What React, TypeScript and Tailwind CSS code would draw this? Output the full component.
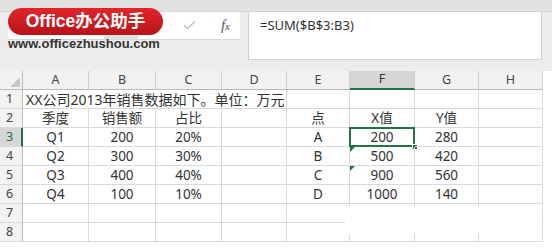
import { Check } from 'lucide-react'

const colW = ['w-[66px]', 'w-[67px]', 'w-[66px]', 'w-[65px]', 'w-[63px]', 'w-[65px]', 'w-[64px]', 'w-[64px]']
const letters = ['A', 'B', 'C', 'D', 'E', 'F', 'G', 'H']

// rows 2..8, columns A..H
const rows: string[][] = [
    ['季度', '销售额', '占比', '', '点', 'X值', 'Y值', ''],
    ['Q1', '200', '20%', '', 'A', '200', '280', ''],
    ['Q2', '300', '30%', '', 'B', '500', '420', ''],
    ['Q3', '400', '40%', '', 'C', '900', '560', ''],
    ['Q4', '100', '10%', '', 'D', '1000', '140', ''],
    ['', '', '', '', '', '', '', ''],
    ['', '', '', '', '', '', '', ''],
]

const RowHead = ({ n, active }: { n: number, active?: boolean }) => (
    <div
        className={`w-[23px] h-[19px] shrink-0 flex items-center pl-[6px] text-[12.5px] border-b border-[#dadada] ${
            active ? 'bg-[#d6d6d6] text-[#217346] border-r-2 border-r-[#217346]' : 'bg-[#f2f2f2] text-[#444] border-r border-r-[#b9b9b9]'
        }`}
    >
        {n}
    </div>
)

export default function App() {
    return (
        <div className="relative w-[552px] h-[250px] bg-white overflow-hidden font-['Noto_Sans','Noto_Sans_CJK_SC',sans-serif] text-[#333]">
            {/* Toolbar / formula bar */}
            <div className="h-[71px] bg-[#ececec] flex flex-col">
                <div className="h-[12px] bg-[#e2e2e2] border-b border-[#d6d6d6]" />
                <div className="flex gap-[8px] pl-[8px]">
                    <div className="w-[232px] h-[28px] bg-white flex items-center border-b border-[#d8d8d8]">
                        <div className="w-[96px]" />
                        <div className="w-[34px] h-full flex items-end">
                            <div className="w-full h-[8px] bg-[#e0e0e0]" />
                        </div>
                        <div className="flex-1 flex items-center justify-end gap-[24px] pr-[10px]">
                            <Check size={15} strokeWidth={2} className="text-[#b8b8b8]" />
                            <span className="font-['Liberation_Serif',serif] italic text-[15px] text-[#555] leading-none">
                                f<span className="text-[11px]">x</span>
                            </span>
                        </div>
                    </div>
                    <div className="w-[294px] h-[49px] -mt-px bg-white border border-[#d3d3d3] pl-[11px] pt-[4px] text-[13px] text-[#333]">
                        =SUM($B$3:B3)
                    </div>
                </div>
            </div>

            {/* Grid */}
            <div className="flex flex-col">
                {/* column header */}
                <div className="flex h-[19px]">
                    <div className="w-[23px] h-[19px] shrink-0 bg-[#f2f2f2] border-r border-b border-[#b9b9b9] flex items-end justify-end p-[2px]">
                        <div className="w-0 h-0 border-l-[10px] border-l-transparent border-b-[10px] border-b-[#c8c8c8]" />
                    </div>
                    {letters.map((l, i) => (
                        <div
                            key={l}
                            className={`${colW[i]} h-[19px] shrink-0 flex items-center justify-center text-[12.5px] border-r border-r-[#d0d0d0] ${
                                l === 'F' ? 'bg-[#d6d6d6] border-b-2 border-b-[#217346] text-[#333]' : 'bg-[#f2f2f2] border-b border-b-[#b9b9b9] text-[#444]'
                            }`}
                        >
                            {l}
                        </div>
                    ))}
                </div>

                {/* row 1 */}
                <div className="flex h-[19px]">
                    <RowHead n={1} />
                    <div className="w-[264px] h-[19px] shrink-0 border-r border-b border-[#dadada] pl-[3px] flex items-center text-[14px] whitespace-nowrap">
                        XX公司2013年销售数据如下。单位：万元
                    </div>
                    {[4, 5, 6, 7].map((i) => (
                        <div key={i} className={`${colW[i]} h-[19px] shrink-0 border-r border-b border-[#dadada]`} />
                    ))}
                </div>

                {rows.map((r, ri) => {
                    const n = ri + 2
                    return (
                        <div key={n} className="flex h-[19px]">
                            <RowHead n={n} active={n === 3} />
                            {r.map((v, ci) => (
                                <div
                                    key={ci}
                                    className={`relative ${colW[ci]} h-[19px] shrink-0 border-r border-b border-[#dadada] flex items-center justify-center text-[13.5px]`}
                                >
                                    {v}
                                    {ci === 5 && (n === 4 || n === 5) && (
                                        <div className="absolute left-0 top-0 w-0 h-0 border-t-[5px] border-t-[#217346] border-r-[5px] border-r-transparent" />
                                    )}
                                    {ci === 5 && n === 3 && (
                                        <>
                                            <div className="absolute -left-px -top-px -right-px -bottom-px border-2 border-[#217346]" />
                                            <div className="absolute -right-[4px] -bottom-[4px] w-[6px] h-[6px] bg-[#217346] border border-white" />
                                        </>
                                    )}
                                </div>
                            ))}
                        </div>
                    )
                })}
            </div>

            {/* erased patch in lower right */}
            <div className="absolute left-[345px] top-[206px] w-[196px] h-[28px] bg-white" />

            {/* Watermark */}
            <div className="absolute left-[8px] top-[8px] flex flex-col">
                <div className="w-[155px] h-[27px] rounded-full bg-gradient-to-b from-[#e0262b] to-[#b8121a] flex items-center justify-center text-white font-bold text-[17.5px] leading-none font-['Liberation_Sans','Noto_Sans_CJK_SC',sans-serif]">
                    Office办公助手
                </div>
                <div className="mt-[1px] text-[13px] font-bold text-[#333] leading-[16px] font-['Liberation_Sans',sans-serif]">
                    www.officezhushou.com
                </div>
            </div>
        </div>
    )
}
